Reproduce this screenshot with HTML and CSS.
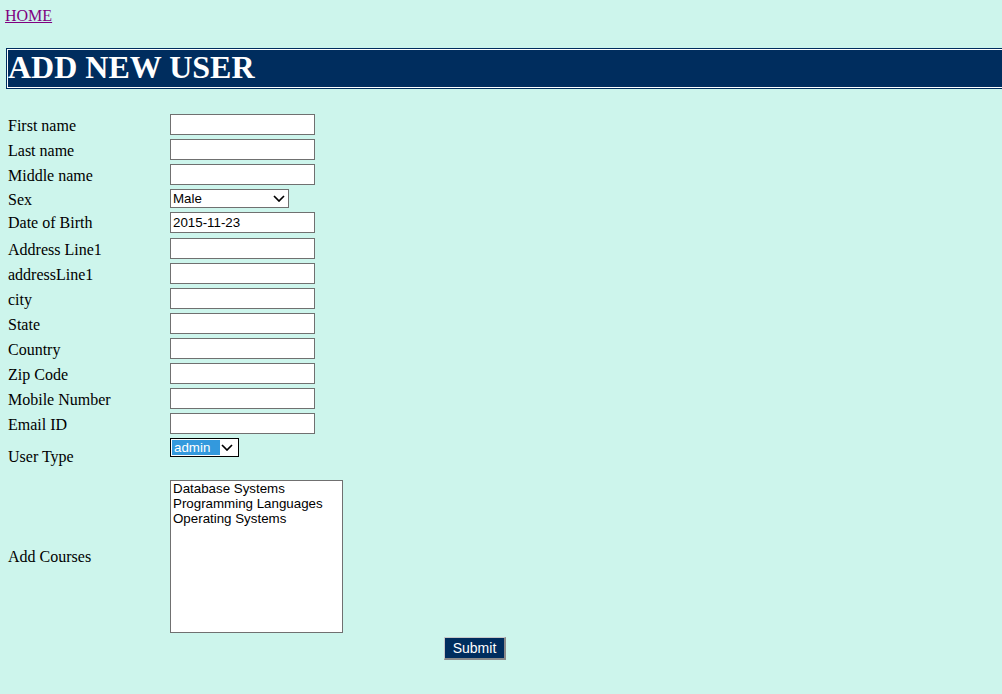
FILE: index.html
```html
<!DOCTYPE html>
<html lang="en">
<head>
<meta charset="utf-8">
<title>Add New User</title>
<link rel="stylesheet" href="styles.css">
</head>
<body>
<div class="topnav"><a class="home" href="#">HOME</a></div>
<h1 class="banner">ADD NEW USER</h1>
<form class="form">
  <label class="lbl">First name</label><div class="cell"><input class="txt" type="text"></div>
  <label class="lbl">Last name</label><div class="cell"><input class="txt" type="text"></div>
  <label class="lbl">Middle name</label><div class="cell"><input class="txt" type="text"></div>
  <label class="lbl row-sex">Sex</label>
  <div class="cell row-sex">
    <span class="selwrap sex">
      <select class="sel"><option>Male</option><option>Female</option></select>
      <svg class="chev" width="12" height="7" viewBox="0 0 12 7"><path d="M1 1 L6 6 L11 1" fill="none" stroke="#000" stroke-width="1.7"/></svg>
    </span>
  </div>
  <label class="lbl row-dob">Date of Birth</label><div class="cell row-dob"><input class="txt" type="text" value="2015-11-23"></div>
  <label class="lbl">Address Line1</label><div class="cell"><input class="txt" type="text"></div>
  <label class="lbl">addressLine1</label><div class="cell"><input class="txt" type="text"></div>
  <label class="lbl">city</label><div class="cell"><input class="txt" type="text"></div>
  <label class="lbl">State</label><div class="cell"><input class="txt" type="text"></div>
  <label class="lbl">Country</label><div class="cell"><input class="txt" type="text"></div>
  <label class="lbl">Zip Code</label><div class="cell"><input class="txt" type="text"></div>
  <label class="lbl">Mobile Number</label><div class="cell"><input class="txt" type="text"></div>
  <label class="lbl">Email ID</label><div class="cell"><input class="txt" type="text"></div>
  <label class="lbl row-type">User Type</label>
  <div class="cell row-type cell-top">
    <span class="selwrap utype">
      <span class="utype-val">admin</span>
      <svg class="chev" width="12" height="7" viewBox="0 0 12 7"><path d="M1 1 L6 6 L11 1" fill="none" stroke="#000" stroke-width="1.7"/></svg>
    </span>
  </div>
  <label class="lbl row-courses">Add Courses</label>
  <div class="cell row-courses">
    <div class="listbox" role="listbox">
      <div class="opt">Database Systems</div>
      <div class="opt">Programming Languages</div>
      <div class="opt">Operating Systems</div>
    </div>
  </div>
  <div class="submit-row"><button class="submit" type="button">Submit</button></div>
</form>
</body>
</html>
```

FILE: styles.css
```css
html { overflow: hidden; }
body {
  margin: 0;
  background: #cdf5ec;
  font-family: "Liberation Serif", "Times New Roman", serif;
  font-size: 16px;
  color: #000;
}
.topnav {
  padding: 7px 0 0 5px;
  height: 18px;
  line-height: 18px;
}
.home { color: #800080; text-decoration: underline; }

.banner {
  box-sizing: border-box;
  height: 41px;
  margin: 23px -20px 0 6px;
  border: 1px solid #002d5e;
  box-shadow: inset 0 0 0 1px #fff;
  background: #002d5e;
  color: #fff;
  font-size: 32px;
  font-weight: bold;
  line-height: 35px;
  padding: 1px 2px 2px 1px;
}

.form {
  display: grid;
  grid-template-columns: 162px auto;
  grid-auto-rows: auto;
  row-gap: 4px;
  margin: 25px 0 0 8px;
  width: 600px;
}
.lbl, .cell { height: 21px; }
.lbl { display: flex; align-items: center; white-space: nowrap; line-height: 18px; padding-top: 2px; box-sizing: border-box; }
.cell { display: flex; align-items: center; }
.row-sex { height: 19px; }
.row-dob { height: 22px; }
.lbl.row-dob { padding-top: 0; }
.cell.row-dob { align-items: flex-start; }
.row-type { height: 38px; }
.lbl.row-type, .lbl.row-courses { padding-top: 0; }
.cell-top { align-items: flex-start; }
.row-courses { height: 153px; }

.txt {
  box-sizing: border-box;
  width: 145px;
  height: 21px;
  margin: 0;
  border: 1px solid #707070;
  background: #fff;
  padding: 0 2px;
  font-family: "Liberation Sans", Arial, sans-serif;
  font-size: 13.333px;
  color: #000;
}

.selwrap { position: relative; display: inline-block; }
.sel {
  -webkit-appearance: none;
  appearance: none;
  box-sizing: border-box;
  width: 119px;
  height: 19px;
  margin: 0;
  border: 1px solid #707070;
  border-radius: 0;
  background: #fff;
  padding: 0 2px;
  font-family: "Liberation Sans", Arial, sans-serif;
  font-size: 13.333px;
  color: #000;
}
.chev { position: absolute; top: 6px; pointer-events: none; }
.sex .chev { right: 4px; }

.utype {
  box-sizing: border-box;
  width: 69px;
  height: 19px;
  border: 1px solid #000;
  background: #fff;
  padding: 1px;
  display: inline-flex;
}
.utype-val {
  width: 48px;
  height: 15px;
  background: #3399dd;
  color: #fff;
  font-family: "Liberation Sans", Arial, sans-serif;
  font-size: 13.333px;
  line-height: 15px;
  padding-left: 2px;
  box-sizing: border-box;
}
.utype .chev { right: 5px; top: 5px; }

.listbox {
  box-sizing: border-box;
  width: 173px;
  height: 153px;
  border: 1px solid #707070;
  background: #fff;
  padding: 0 2px;
  font-family: "Liberation Sans", Arial, sans-serif;
  font-size: 13.333px;
  line-height: 15px;
  color: #000;
}
.opt { white-space: nowrap; }

.submit-row { grid-column: 1 / 3; height: 23px; padding-left: 436px; }
.submit {
  box-sizing: border-box;
  width: 62px;
  height: 23px;
  margin: 0;
  background: #002d5e;
  color: #fff;
  font-family: "Liberation Sans", Arial, sans-serif;
  font-size: 14px;
  border-style: solid;
  border-width: 1px 2px 2px 1px;
  border-color: #c8c8c8 #8a8a8a #8a8a8a #c8c8c8;
  padding: 0;
}
```
